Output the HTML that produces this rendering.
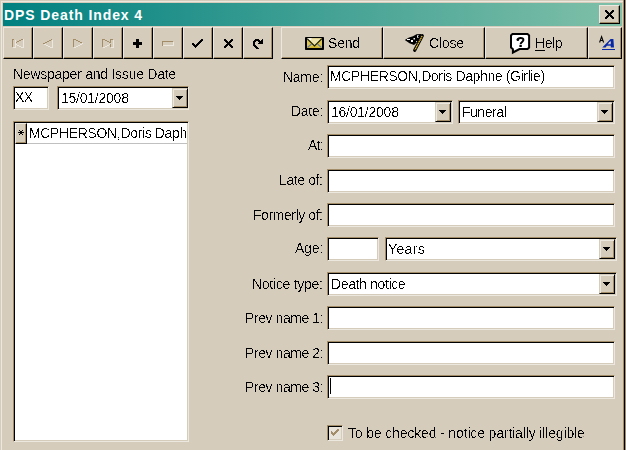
<!DOCTYPE html>
<html><head><meta charset="utf-8">
<style>
*{margin:0;padding:0;box-sizing:border-box}
html,body{width:626px;height:450px;overflow:hidden;background:#d5ccbb}
body{position:relative;font-family:"Liberation Sans",sans-serif;font-size:13px;color:#000}
.a{position:absolute}
.title{left:3px;top:3px;width:619px;height:23px;background:linear-gradient(to right,#008080,#80c0a8)}
.ttext{left:4px;top:7px;font-weight:bold;font-size:14px;letter-spacing:0.9px;color:#fff;white-space:nowrap}
.btn{background:#d5ccbb;border-top:1px solid #ece8e0;border-left:1px solid #ece8e0;border-right:1px solid #000;border-bottom:1px solid #000;box-shadow:inset -1px -1px 0 #a28d68}
.sunk{background:#fff;border-top:1px solid #a28d68;border-left:1px solid #a28d68;border-right:1px solid #ece8e0;border-bottom:1px solid #ece8e0;box-shadow:inset 1px 1px 0 #000,inset -1px -1px 0 #d5ccbb}
.lbl{white-space:nowrap;text-align:right}
.txt{white-space:nowrap;overflow:hidden;filter:url(#aa)}
.dd{background:#d5ccbb;border-top:1px solid #d5ccbb;border-left:1px solid #d5ccbb;border-right:1px solid #000;border-bottom:1px solid #000;box-shadow:inset 1px 1px 0 #ece8e0,inset -1px -1px 0 #a28d68}
</style></head><body>
<div class="a" style="left:1px;top:1px;width:1px;height:449px;background:#ece8e0"></div>
<div class="a" style="left:1px;top:1px;width:622px;height:1px;background:#ece8e0"></div>
<div class="a" style="left:623px;top:0;width:1px;height:450px;background:#a28d68"></div>
<div class="a" style="left:624px;top:0;width:1px;height:450px;background:#000"></div>
<div class="a" style="left:625px;top:0;width:1px;height:450px;background:#a28d68"></div>
<div class="a title"></div><div class="a ttext">DPS Death Index 4</div>
<div class="a btn" style="left:599px;top:5px;width:21px;height:19px"></div>
<div class="a btn" style="left:3px;top:27px;width:30px;height:32px"></div>
<div class="a btn" style="left:33px;top:27px;width:30px;height:32px"></div>
<div class="a btn" style="left:63px;top:27px;width:30px;height:32px"></div>
<div class="a btn" style="left:93px;top:27px;width:30px;height:32px"></div>
<div class="a btn" style="left:123px;top:27px;width:30px;height:32px"></div>
<div class="a btn" style="left:153px;top:27px;width:30px;height:32px"></div>
<div class="a btn" style="left:183px;top:27px;width:30px;height:32px"></div>
<div class="a btn" style="left:213px;top:27px;width:30px;height:32px"></div>
<div class="a btn" style="left:243px;top:27px;width:30px;height:32px"></div>
<div class="a btn" style="left:281px;top:27px;width:102px;height:32px"></div>
<div class="a btn" style="left:383px;top:27px;width:102px;height:32px"></div>
<div class="a btn" style="left:485px;top:27px;width:103px;height:32px"></div>
<div class="a btn" style="left:588px;top:27px;width:34px;height:32px"></div>
<div class="a sunk" style="left:13px;top:86px;width:36px;height:24px;"></div>
<div class="a sunk" style="left:57px;top:86px;width:132px;height:24px;"></div>
<div class="a dd" style="left:172px;top:88px;width:16px;height:20px"></div>
<div class="a sunk" style="left:13px;top:121px;width:176px;height:321px;"></div>
<div class="a btn" style="left:15px;top:123px;width:12px;height:21px"></div>
<div class="a" style="left:27px;top:143px;width:160px;height:1px;background:#c0c0c0"></div>
<div class="a sunk" style="left:327px;top:65px;width:288px;height:24px;"></div>
<div class="a sunk" style="left:327px;top:100px;width:126px;height:24px;"></div>
<div class="a dd" style="left:435px;top:102px;width:16px;height:20px"></div>
<div class="a sunk" style="left:458px;top:100px;width:157px;height:24px;"></div>
<div class="a dd" style="left:597px;top:102px;width:16px;height:20px"></div>
<div class="a sunk" style="left:327px;top:134px;width:288px;height:24px;"></div>
<div class="a sunk" style="left:327px;top:169px;width:288px;height:24px;"></div>
<div class="a sunk" style="left:327px;top:203px;width:288px;height:24px;"></div>
<div class="a sunk" style="left:327px;top:237px;width:52px;height:24px;"></div>
<div class="a sunk" style="left:385px;top:237px;width:232px;height:24px;"></div>
<div class="a dd" style="left:599px;top:239px;width:16px;height:20px"></div>
<div class="a sunk" style="left:327px;top:272px;width:290px;height:24px;"></div>
<div class="a dd" style="left:599px;top:274px;width:16px;height:20px"></div>
<div class="a sunk" style="left:327px;top:306px;width:288px;height:24px;"></div>
<div class="a sunk" style="left:327px;top:341px;width:288px;height:24px;"></div>
<div class="a sunk" style="left:327px;top:375px;width:288px;height:24px;"></div>
<div class="a" style="left:330px;top:378px;width:1px;height:16px;background:#000"></div>
<div class="a" style="left:327px;top:425px;width:16px;height:16px;background:#e8e4dc;border-top:1px solid #a28d68;border-left:1px solid #a28d68;border-right:1px solid #ece8e0;border-bottom:1px solid #ece8e0;box-shadow:inset 1px 1px 0 #000,inset -1px -1px 0 #d5ccbb"></div>
<div class="a txt" style="left:328px;top:35px;font-size:14px;letter-spacing:-0.2px;">Send</div>
<div class="a txt" style="left:429px;top:35px;font-size:14px;letter-spacing:-0.2px;">Close</div>
<div class="a txt" style="left:535px;top:35px;font-size:14px;letter-spacing:-0.434px;"><span style="text-decoration:underline;text-underline-offset:2px">H</span>elp</div>
<div class="a txt" style="left:13px;top:66px;font-size:14px;letter-spacing:-0.25px;">Newspaper and Issue Date</div>
<div class="a txt" style="left:15px;top:89px;font-size:14px;letter-spacing:-0.5px;">XX</div>
<div class="a txt" style="left:61px;top:90px;font-size:14px;letter-spacing:-0.239px;">15/01/2008</div>
<div class="a txt" style="left:330px;top:68px;font-size:14px;letter-spacing:-0.377px;">MCPHERSON,Doris Daphne (Girlie)</div>
<div class="a txt" style="left:331px;top:104px;font-size:14px;letter-spacing:-0.239px;">16/01/2008</div>
<div class="a txt" style="left:462px;top:104px;font-size:14px;letter-spacing:-0.483px;">Funeral</div>
<div class="a txt" style="left:388px;top:241px;font-size:14px;letter-spacing:0.35px;">Years</div>
<div class="a txt" style="left:331px;top:276px;font-size:14px;letter-spacing:-0.368px;">Death notice</div>
<div class="a txt" style="left:283px;top:69px;font-size:14px;letter-spacing:-0.3px;">Name:</div>
<div class="a txt" style="left:291px;top:103px;font-size:14px;letter-spacing:-0.3px;">Date:</div>
<div class="a txt" style="left:308px;top:137px;font-size:14px;letter-spacing:-0.9px;">At:</div>
<div class="a txt" style="left:279px;top:172px;font-size:14px;letter-spacing:-0.386px;">Late of:</div>
<div class="a txt" style="left:253px;top:207px;font-size:14px;letter-spacing:-0.427px;">Formerly of:</div>
<div class="a txt" style="left:295px;top:240px;font-size:14px;letter-spacing:-0.233px;">Age:</div>
<div class="a txt" style="left:252px;top:276px;font-size:14px;letter-spacing:-0.282px;">Notice type:</div>
<div class="a txt" style="left:245px;top:310px;font-size:14px;letter-spacing:-0.427px;">Prev name 1:</div>
<div class="a txt" style="left:245px;top:345px;font-size:14px;letter-spacing:-0.427px;">Prev name 2:</div>
<div class="a txt" style="left:245px;top:379px;font-size:14px;letter-spacing:-0.427px;">Prev name 3:</div>
<div class="a txt" style="left:348px;top:425px;font-size:14px;letter-spacing:-0.147px;">To be checked - notice partially illegible</div>
<div class="a txt" style="left:29px;top:125px;font-size:14px;letter-spacing:-0.35px;width:157px;">MCPHERSON,Doris Daphne</div>
<svg class="a" style="left:0;top:0" width="626" height="450" shape-rendering="crispEdges"><filter id="aa" filterUnits="userSpaceOnUse" x="-10" y="-10" width="400" height="40"><feComponentTransfer><feFuncA type="linear" slope="60" intercept="-35"/></feComponentTransfer></filter><rect x="12" y="39" width="1" height="8" fill="#a28d68"/><rect x="13" y="39" width="1" height="1" fill="#a28d68"/><rect x="16" y="42" width="1" height="1" fill="#a28d68"/><rect x="17" y="41" width="1" height="1" fill="#a28d68"/><rect x="18" y="41" width="1" height="1" fill="#a28d68"/><rect x="19" y="40" width="1" height="1" fill="#a28d68"/><rect x="20" y="40" width="1" height="1" fill="#a28d68"/><rect x="21" y="39" width="1" height="1" fill="#a28d68"/><rect x="22" y="39" width="1" height="1" fill="#a28d68"/><rect x="15" y="40" width="1" height="8" fill="#ece8e0"/><rect x="23" y="39" width="1" height="9" fill="#ece8e0"/><rect x="13" y="47" width="3" height="1" fill="#ece8e0"/><rect x="16" y="44" width="1" height="1" fill="#ece8e0"/><rect x="17" y="45" width="1" height="1" fill="#ece8e0"/><rect x="18" y="45" width="1" height="1" fill="#ece8e0"/><rect x="19" y="46" width="1" height="1" fill="#ece8e0"/><rect x="20" y="46" width="1" height="1" fill="#ece8e0"/><rect x="21" y="47" width="1" height="1" fill="#ece8e0"/><rect x="22" y="47" width="1" height="1" fill="#ece8e0"/><rect x="43" y="43" width="1" height="1" fill="#a28d68"/><rect x="44" y="43" width="1" height="1" fill="#a28d68"/><rect x="45" y="42" width="1" height="1" fill="#a28d68"/><rect x="46" y="42" width="1" height="1" fill="#a28d68"/><rect x="47" y="41" width="1" height="1" fill="#a28d68"/><rect x="48" y="41" width="1" height="1" fill="#a28d68"/><rect x="49" y="40" width="1" height="1" fill="#a28d68"/><rect x="50" y="40" width="1" height="1" fill="#a28d68"/><rect x="51" y="39" width="1" height="1" fill="#a28d68"/><rect x="52" y="40" width="1" height="8" fill="#ece8e0"/><rect x="44" y="44" width="1" height="1" fill="#ece8e0"/><rect x="45" y="44" width="1" height="1" fill="#ece8e0"/><rect x="46" y="45" width="1" height="1" fill="#ece8e0"/><rect x="47" y="45" width="1" height="1" fill="#ece8e0"/><rect x="48" y="46" width="1" height="1" fill="#ece8e0"/><rect x="49" y="46" width="1" height="1" fill="#ece8e0"/><rect x="50" y="47" width="1" height="1" fill="#ece8e0"/><rect x="51" y="47" width="1" height="1" fill="#ece8e0"/><rect x="73" y="39" width="1" height="8" fill="#a28d68"/><rect x="74" y="39" width="2" height="1" fill="#a28d68"/><rect x="76" y="40" width="1" height="1" fill="#a28d68"/><rect x="77" y="40" width="1" height="1" fill="#a28d68"/><rect x="78" y="41" width="1" height="1" fill="#a28d68"/><rect x="79" y="41" width="1" height="1" fill="#a28d68"/><rect x="80" y="42" width="1" height="1" fill="#a28d68"/><rect x="81" y="42" width="1" height="1" fill="#a28d68"/><rect x="74" y="47" width="1" height="1" fill="#ece8e0"/><rect x="75" y="47" width="1" height="1" fill="#ece8e0"/><rect x="76" y="46" width="1" height="1" fill="#ece8e0"/><rect x="77" y="46" width="1" height="1" fill="#ece8e0"/><rect x="78" y="45" width="1" height="1" fill="#ece8e0"/><rect x="79" y="45" width="1" height="1" fill="#ece8e0"/><rect x="80" y="44" width="1" height="1" fill="#ece8e0"/><rect x="81" y="44" width="1" height="1" fill="#ece8e0"/><rect x="82" y="43" width="1" height="1" fill="#ece8e0"/><rect x="102" y="39" width="1" height="8" fill="#a28d68"/><rect x="110" y="39" width="1" height="4" fill="#a28d68"/><rect x="110" y="44" width="1" height="3" fill="#a28d68"/><rect x="103" y="39" width="2" height="1" fill="#a28d68"/><rect x="111" y="39" width="2" height="1" fill="#a28d68"/><rect x="105" y="40" width="1" height="1" fill="#a28d68"/><rect x="106" y="40" width="1" height="1" fill="#a28d68"/><rect x="107" y="41" width="1" height="1" fill="#a28d68"/><rect x="108" y="41" width="1" height="1" fill="#a28d68"/><rect x="109" y="42" width="1" height="1" fill="#a28d68"/><rect x="113" y="40" width="1" height="8" fill="#ece8e0"/><rect x="103" y="47" width="2" height="1" fill="#ece8e0"/><rect x="111" y="47" width="3" height="1" fill="#ece8e0"/><rect x="105" y="46" width="1" height="1" fill="#ece8e0"/><rect x="106" y="46" width="1" height="1" fill="#ece8e0"/><rect x="107" y="45" width="1" height="1" fill="#ece8e0"/><rect x="108" y="45" width="1" height="1" fill="#ece8e0"/><rect x="109" y="44" width="1" height="1" fill="#ece8e0"/><rect x="136" y="39" width="3" height="9" fill="#000"/><rect x="133" y="42" width="9" height="3" fill="#000"/><rect x="162" y="41" width="11" height="1" fill="#a28d68"/><rect x="162" y="42" width="1" height="4" fill="#a28d68"/><rect x="163" y="45" width="11" height="1" fill="#ece8e0"/><rect x="173" y="42" width="1" height="4" fill="#ece8e0"/><rect x="192" y="43" width="1" height="2" fill="#000"/><rect x="193" y="43" width="1" height="3" fill="#000"/><rect x="194" y="44" width="1" height="3" fill="#000"/><rect x="195" y="45" width="1" height="3" fill="#000"/><rect x="196" y="44" width="1" height="3" fill="#000"/><rect x="197" y="43" width="1" height="3" fill="#000"/><rect x="198" y="42" width="1" height="3" fill="#000"/><rect x="199" y="41" width="1" height="3" fill="#000"/><rect x="200" y="40" width="1" height="3" fill="#000"/><rect x="201" y="39" width="1" height="3" fill="#000"/><rect x="202" y="39" width="1" height="2" fill="#000"/><rect x="224" y="39" width="1" height="2" fill="#000"/><rect x="224" y="46" width="1" height="2" fill="#000"/><rect x="225" y="39" width="1" height="3" fill="#000"/><rect x="225" y="45" width="1" height="3" fill="#000"/><rect x="226" y="40" width="1" height="3" fill="#000"/><rect x="226" y="44" width="1" height="3" fill="#000"/><rect x="227" y="41" width="1" height="5" fill="#000"/><rect x="228" y="42" width="1" height="3" fill="#000"/><rect x="229" y="41" width="1" height="5" fill="#000"/><rect x="230" y="40" width="1" height="3" fill="#000"/><rect x="230" y="44" width="1" height="3" fill="#000"/><rect x="231" y="39" width="1" height="3" fill="#000"/><rect x="231" y="45" width="1" height="3" fill="#000"/><rect x="232" y="39" width="1" height="2" fill="#000"/><rect x="232" y="46" width="1" height="2" fill="#000"/><rect x="255" y="39" width="4" height="1" fill="#000"/><rect x="262" y="39" width="1" height="1" fill="#000"/><rect x="254" y="40" width="6" height="1" fill="#000"/><rect x="261" y="40" width="2" height="1" fill="#000"/><rect x="253" y="41" width="3" height="1" fill="#000"/><rect x="258" y="41" width="5" height="1" fill="#000"/><rect x="253" y="42" width="2" height="1" fill="#000"/><rect x="259" y="42" width="4" height="1" fill="#000"/><rect x="253" y="43" width="2" height="1" fill="#000"/><rect x="258" y="43" width="5" height="1" fill="#000"/><rect x="253" y="44" width="2" height="1" fill="#000"/><rect x="253" y="45" width="3" height="1" fill="#000"/><rect x="254" y="46" width="3" height="1" fill="#000"/><rect x="255" y="47" width="3" height="1" fill="#000"/><rect x="256" y="48" width="3" height="1" fill="#000"/><rect x="605" y="10" width="1" height="2" fill="#000"/><rect x="605" y="17" width="1" height="2" fill="#000"/><rect x="606" y="10" width="1" height="3" fill="#000"/><rect x="606" y="16" width="1" height="3" fill="#000"/><rect x="607" y="11" width="1" height="3" fill="#000"/><rect x="607" y="15" width="1" height="3" fill="#000"/><rect x="608" y="12" width="1" height="5" fill="#000"/><rect x="609" y="13" width="1" height="3" fill="#000"/><rect x="610" y="12" width="1" height="5" fill="#000"/><rect x="611" y="11" width="1" height="3" fill="#000"/><rect x="611" y="15" width="1" height="3" fill="#000"/><rect x="612" y="10" width="1" height="3" fill="#000"/><rect x="612" y="16" width="1" height="3" fill="#000"/><rect x="613" y="10" width="1" height="2" fill="#000"/><rect x="613" y="17" width="1" height="2" fill="#000"/><rect x="19" y="130" width="1" height="1" fill="#000"/><rect x="22" y="130" width="1" height="1" fill="#000"/><rect x="20" y="131" width="2" height="1" fill="#000"/><rect x="18" y="132" width="6" height="1" fill="#000"/><rect x="20" y="133" width="2" height="1" fill="#000"/><rect x="19" y="134" width="1" height="1" fill="#000"/><rect x="22" y="134" width="1" height="1" fill="#000"/><rect x="439" y="110" width="7" height="1" fill="#000"/><rect x="440" y="111" width="5" height="1" fill="#000"/><rect x="441" y="112" width="3" height="1" fill="#000"/><rect x="442" y="113" width="1" height="1" fill="#000"/><rect x="601" y="110" width="7" height="1" fill="#000"/><rect x="602" y="111" width="5" height="1" fill="#000"/><rect x="603" y="112" width="3" height="1" fill="#000"/><rect x="604" y="113" width="1" height="1" fill="#000"/><rect x="603" y="247" width="7" height="1" fill="#000"/><rect x="604" y="248" width="5" height="1" fill="#000"/><rect x="605" y="249" width="3" height="1" fill="#000"/><rect x="606" y="250" width="1" height="1" fill="#000"/><rect x="603" y="282" width="7" height="1" fill="#000"/><rect x="604" y="283" width="5" height="1" fill="#000"/><rect x="605" y="284" width="3" height="1" fill="#000"/><rect x="606" y="285" width="1" height="1" fill="#000"/><rect x="176" y="96" width="7" height="1" fill="#000"/><rect x="177" y="97" width="5" height="1" fill="#000"/><rect x="178" y="98" width="3" height="1" fill="#000"/><rect x="179" y="99" width="1" height="1" fill="#000"/><rect x="331" y="431" width="1" height="3" fill="#a28d68"/><rect x="332" y="432" width="1" height="3" fill="#a28d68"/><rect x="333" y="433" width="1" height="3" fill="#a28d68"/><rect x="334" y="432" width="1" height="3" fill="#a28d68"/><rect x="335" y="431" width="1" height="3" fill="#a28d68"/><rect x="336" y="430" width="1" height="3" fill="#a28d68"/><rect x="337" y="429" width="1" height="3" fill="#a28d68"/><rect x="338" y="429" width="1" height="2" fill="#a28d68"/>
</svg>

<svg class="a" style="left:0;top:0" width="626" height="450">
<!-- envelope -->
<rect x="305" y="37" width="19" height="13" rx="0.8" fill="#000"/>
<rect x="307" y="38.3" width="15" height="9.7" fill="#dcc650"/>
<polygon points="307,38.3 322,38.3 314.5,45.8" fill="#efe3ac"/>
<polygon points="307,38.3 312,38.3 309.5,40.8" fill="#fff"/>
<polygon points="307,48 314.5,45.5 322,48" fill="#d2b630"/>
<polyline points="307.2,38.8 314.5,46 321.8,38.8" fill="none" stroke="#202000" stroke-width="1.2"/>
<line x1="307.5" y1="47.5" x2="311.5" y2="44" stroke="#6878a0" stroke-width="1.1"/>
<line x1="321.5" y1="47.5" x2="317.5" y2="44" stroke="#6878a0" stroke-width="1.1"/>
<!-- flag -->
<polygon points="404.8,40 409,37.6 413,36.2 416.5,34.3 421.5,34 419,40.5 414,45 409.5,43.2" fill="#000"/>
<rect x="407" y="39" width="3" height="1" fill="#fff"/>
<rect x="411" y="40" width="2" height="2" fill="#fff"/>
<rect x="413.5" y="38" width="1.5" height="1.5" fill="#eee"/>
<path d="M418.5,35.5 h-1 v2 h1" fill="none" stroke="#fff" stroke-width="0.9"/>
<rect x="416" y="41" width="1" height="1" fill="#ccc"/>
<line x1="422.3" y1="35.7" x2="414.7" y2="50.3" stroke="#000" stroke-width="3.2" stroke-linecap="round"/>
<line x1="422.1" y1="36" x2="414.9" y2="50" stroke="#f0c828" stroke-width="1.3" stroke-dasharray="1.4,0.5"/>
<!-- help bubble -->
<path d="M513,34 H528 Q529,34 529,35 V48 Q529,49 528,49 H519 L513,52 V49 Q511,49 511,48 V35 Q511,34 512,34 Z" fill="#fff"/>
<path d="M513,33.9 H527.5 L529.1,35.5 V47.5 L527.5,49.1 H519.5 L512.9,52.5 V49.1 L511,47.5 V35.5 L512.5,33.9 Z" fill="none" stroke="#000" stroke-width="2"/>
<path d="M517.6,40.2 C517.4,37.6 523.6,37.2 523.4,40 C523.3,42 520.6,42 520.6,44.3" fill="none" stroke="#000" stroke-width="2"/>
<circle cx="517.9" cy="39.8" r="1.3" fill="#000"/>
<rect x="519.4" y="45" width="2.4" height="2" fill="#000"/>
<!-- A icon -->
<path d="M599.6,42.5 L601.6,36.6 L603.6,42.5 M600.3,40.5 H603" fill="none" stroke="#000" stroke-width="1.1"/>
<polygon points="602.3,47.6 605.6,47.6 609.4,42 610.6,42 610.8,47.6 614,47.6 613.4,39.1 610.6,39.1" fill="#0828a8"/>
<rect x="606.5" y="44.3" width="4.5" height="1.4" fill="#0828a8"/>
<polygon points="609.3,42.3 610.6,40.8 610.7,43.6 608.4,43.6" fill="#d5ccbb"/>
<rect x="602" y="49" width="13" height="1" fill="#0828a8"/>
</svg>

</body></html>
